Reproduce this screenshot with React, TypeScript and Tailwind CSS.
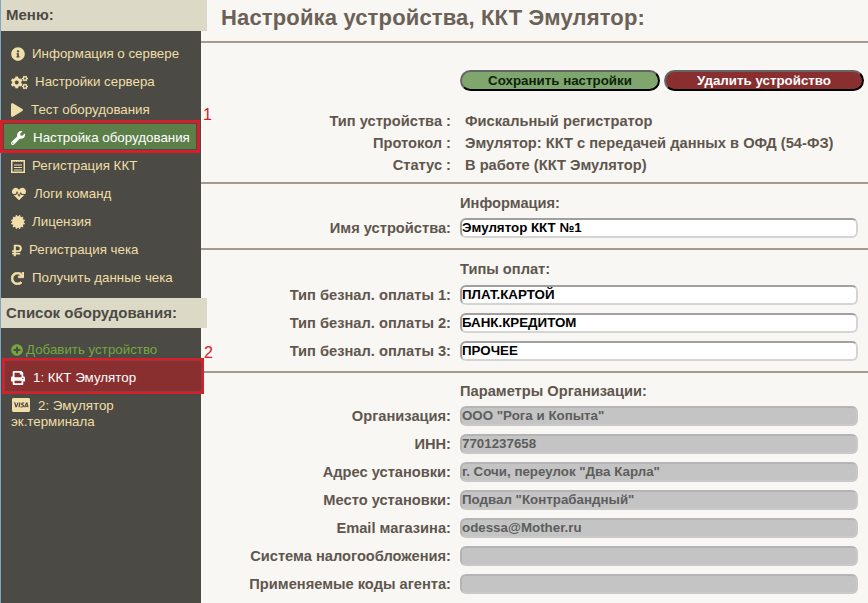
import React from 'react';
import {
  FaInfoCircle,
  FaCogs,
  FaPlay,
  FaWrench,
  FaHeartbeat,
  FaCertificate,
  FaRubleSign,
  FaRedo,
  FaPlusCircle,
  FaPrint,
  FaCcVisa,
} from 'react-icons/fa';

const RegIcon = () => (
  <svg viewBox="0 0 14 14" className="w-[14px] h-[14px]" fill="none" stroke="currentColor">
    <rect x="0.75" y="1.75" width="12.5" height="11.5" strokeWidth="1.5" />
    <path d="M3 1v2M5.5 1v2M8 1v2M10.5 1v2M3 6h8M3 8.5h8M3 11h8" strokeWidth="1.2" />
  </svg>
);

const menu = [
  { icon: <FaInfoCircle className="w-[14px] h-[14px]" />, label: 'Информация о сервере', gap: 'gap-[7px]' },
  { icon: <FaCogs className="w-[17px] h-[15px]" />, label: 'Настройки сервера', gap: 'gap-[7px]' },
  { icon: <FaPlay className="w-[12px] h-[14px]" />, label: 'Тест оборудования', gap: 'gap-[8px]' },
  { icon: <FaWrench className="w-[14px] h-[14px] text-white" />, label: 'Настройка оборудования', gap: 'gap-[8px]', active: true },
  { icon: <RegIcon />, label: 'Регистрация ККТ', gap: 'gap-[7px]' },
  { icon: <FaHeartbeat className="w-[16px] h-[14px]" />, label: 'Логи команд', gap: 'gap-[7px]' },
  { icon: <FaCertificate className="w-[14px] h-[14px]" />, label: 'Лицензия', gap: 'gap-[7px]' },
  { icon: <FaRubleSign className="w-[12px] h-[13px]" />, label: 'Регистрация чека', gap: 'gap-[6px]' },
  { icon: <FaRedo className="w-[13px] h-[13px]" stroke="currentColor" strokeWidth="30" />, label: 'Получить данные чека', gap: 'gap-[8px]' },
];

const Divider = () => <div className="h-[2px] shrink-0 bg-[#a59a90]" />;

const Field: React.FC<{ label: string; value?: string; disabled?: boolean }> = ({ label, value = '', disabled }) => (
  <div className="grid grid-cols-[250px_398px] gap-x-[9px] items-center">
    <div className="text-right text-[14.67px] leading-[20px] font-bold text-[#5f564e] whitespace-nowrap">{label}</div>
    <div
      className={`h-[20px] rounded-[6px] border-2 flex items-center text-[13.33px] font-bold whitespace-nowrap ${
        disabled
          ? 'bg-[#c4c4c4] border-t-[#b4b4b4] border-l-[#b4b4b4] border-r-[#c8c8c8] border-b-[#c8c8c8] text-[#5d5d5d]'
          : 'bg-white border-t-[#a0a0a0] border-l-[#a0a0a0] border-r-[#d4d4d4] border-b-[#d4d4d4] text-black'
      }`}
    >
      {value}
    </div>
  </div>
);

const SectionTitle: React.FC<{ children: React.ReactNode }> = ({ children }) => (
  <div className="pl-[259px] text-[14.67px] leading-[16px] font-bold text-[#5f564e]">{children}</div>
);

const InfoRow: React.FC<{ label: string; value: string }> = ({ label, value }) => (
  <div className="grid grid-cols-[250px_1fr] gap-x-[14px] h-[22px] items-center text-[14.67px] font-bold text-[#5f564e]">
    <div className="text-right">{label}</div>
    <div className="whitespace-nowrap">{value}</div>
  </div>
);

export default function App() {
  return (
    <div className="flex w-[868px] h-[603px] overflow-hidden bg-[#f9f7f3] font-['Liberation_Sans',Arial,sans-serif]">
      <aside className="w-[201px] shrink-0 bg-[#4b4a44] border-l border-[#7ea6c4] flex flex-col">
        <div className="w-[206px] h-[31px] bg-[#dcd9c6] text-[#4b4a44] text-[15px] font-bold flex items-center pl-[5px] relative z-10">
          Меню:
        </div>
        <nav className="pt-[9px] flex flex-col">
          {menu.map((m) => (
            <div key={m.label} className={`relative h-[28px] flex items-center ${m.gap} pl-[10px] text-[13.33px] whitespace-nowrap ${m.active ? 'text-white' : 'text-[#f0dfa8]'}`}>
              {m.active && (
                <>
                  <div className="absolute left-[-1px] top-[-4px] w-[200px] h-[33px] border-[3px] border-[#d3202a] p-[1px]">
                    <div className="h-full bg-[#5c7f4a]" />
                  </div>
                  <span className="absolute left-[202px] top-[-21px] text-[16px] text-[#d3202a]">1</span>
                </>
              )}
              <span className="relative shrink-0">{m.icon}</span>
              <span className="relative">{m.label}</span>
            </div>
          ))}
        </nav>
        <div className="mt-[6px] w-[206px] h-[30px] bg-[#dcd9c6] text-[#4b4a44] text-[15px] font-bold flex items-center pl-[5px] relative z-10">
          Список оборудования:
        </div>
        <div className="pt-[8px] flex flex-col">
          <div className="relative h-[28px] flex items-center gap-[3px] pl-[10px] text-[13.33px] text-[#74a83f] whitespace-nowrap">
            <FaPlusCircle className="w-[12px] h-[12px]" />
            Добавить устройство
            <span className="absolute left-[203px] top-[5px] text-[16px] text-[#d3202a]">2</span>
          </div>
          <div className="relative h-[28px] flex items-center gap-[8px] pl-[10px] text-[13.33px] text-white whitespace-nowrap z-10">
            <div className="absolute left-[1px] top-[-6px] w-[202px] h-[36px] border-[3px] border-[#d3202a] p-[1px]">
              <div className="h-full bg-[#8a2f30]" />
            </div>
            <FaPrint className="relative w-[14px] h-[14px]" />
            <span className="relative">1: ККТ Эмулятор</span>
          </div>
          <div className="pt-[5px] pl-[10px] text-[13.33px] leading-[16px] text-[#f0dfa8]">
            <FaCcVisa className="inline-block w-[20px] h-[16px] mr-[7px] align-[-3px]" />
            2: Эмулятор
            <br />
            эк.терминала
          </div>
        </div>
      </aside>
      <main className="flex-1 flex flex-col min-w-0">
        <div className="h-[41px] shrink-0 flex items-center pl-[20px] pb-[7px] text-[22px] tracking-[0.15px] font-bold text-[#6b6157] whitespace-nowrap">
          Настройка устройства, ККТ Эмулятор:
        </div>
        <Divider />
        <div className="pt-[27px] pl-[259px] flex gap-[4px]">
          <button className="w-[200px] h-[21px] rounded-full border-2 border-t-[#666] border-l-[#666] border-r-black border-b-black bg-[#7fa66d] text-[13.33px] leading-none font-bold text-[#0e1f0e]">
            Сохранить настройки
          </button>
          <button className="w-[200px] h-[21px] rounded-full border-2 border-t-[#666] border-l-[#666] border-r-black border-b-black bg-[#8a2f30] text-[13.33px] leading-none font-bold text-white">
            Удалить устройство
          </button>
        </div>
        <div className="pt-[19px] pb-[6px]">
          <InfoRow label="Тип устройства :" value="Фискальный регистратор" />
          <InfoRow label="Протокол :" value="Эмулятор: ККТ с передачей данных в ОФД (54-ФЗ)" />
          <InfoRow label="Статус :" value="В работе (ККТ Эмулятор)" />
        </div>
        <Divider />
        <div className="pt-[11px] pb-[10px] flex flex-col gap-[7px]">
          <SectionTitle>Информация:</SectionTitle>
          <Field label="Имя устройства:" value="Эмулятор ККТ №1" />
        </div>
        <Divider />
        <div className="pt-[11px] pb-[10px] flex flex-col gap-[8px]">
          <SectionTitle>Типы оплат:</SectionTitle>
          <Field label="Тип безнал. оплаты 1:" value="ПЛАТ.КАРТОЙ" />
          <Field label="Тип безнал. оплаты 2:" value="БАНК.КРЕДИТОМ" />
          <Field label="Тип безнал. оплаты 3:" value="ПРОЧЕЕ" />
        </div>
        <Divider />
        <div className="pt-[10px]">
          <SectionTitle>Параметры Организации:</SectionTitle>
          <div className="mt-[7px] flex flex-col gap-[8px]">
            <Field disabled label="Организация:" value={'ООО "Рога и Копыта"'} />
            <Field disabled label="ИНН:" value="7701237658" />
            <Field disabled label="Адрес установки:" value={'г. Сочи, переулок "Два Карла"'} />
            <Field disabled label="Место установки:" value={'Подвал "Контрабандный"'} />
            <Field disabled label="Email магазина:" value="odessa@Mother.ru" />
            <Field disabled label="Система налогообложения:" />
            <Field disabled label="Применяемые коды агента:" />
          </div>
        </div>
      </main>
    </div>
  );
}
